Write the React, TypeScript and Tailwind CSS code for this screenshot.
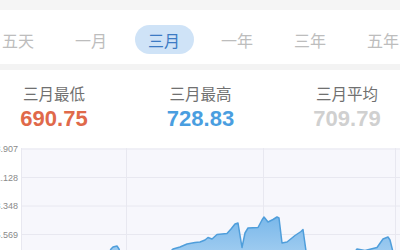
import React from "react";

const tabs = ["五天", "一月", "三月", "一年", "三年", "五年"];

const pts: [number, number][] = [
  [21, 275], [100, 262], [108, 255], [111, 249], [113, 247], [117, 246], [119, 249], [122, 258],
  [166, 260], [170, 252], [173, 249], [180, 247], [187, 244], [195, 242.5], [200, 242], [205, 240],
  [208, 237.5], [212, 239], [217, 234.5], [227, 233.5], [231, 229], [235, 224], [238, 223],
  [242, 247.5], [245, 233], [248, 228], [258, 227.5], [262, 220], [264, 217], [268, 222],
  [273, 219.5], [277, 217], [279, 218], [282, 243], [287, 242], [295, 235.5], [301, 231.5],
  [303, 229.5], [306, 251], [310, 262], [350, 262], [354, 253], [357, 249], [365, 250.5],
  [373, 248.5], [377, 247.5], [383, 239], [388, 237], [390, 240], [393, 252], [400, 262],
];

export default function App() {
  const oy = 140;
  const line = pts.map(([x, y], i) => `${i === 0 ? "M" : "L"}${x} ${y - oy}`).join(" ");
  const area = `${line} L400 130 L21 130 Z`;
  const gridY = [149, 177.5, 206, 234.5];
  const labels = ["728.907", "721.128", "713.348", "705.569"];
  const gridX = [21.5, 126.5, 263.5, 395.5];
  return (
    <div
      className="w-[400px] h-[250px] overflow-hidden bg-white"
      style={{ fontFamily: '"Noto Sans CJK SC", "Noto Sans", sans-serif' }}
    >
      <div className="h-[10px] bg-[#f5f5f5]" />
      <div className="bg-white pt-[15px] pb-[10px] overflow-hidden">
        <div className="flex gap-[14px] ml-[-11.5px]">
          {tabs.map((t, i) => (
            <div
              key={t}
              className={
                i === 2
                  ? "shrink-0 w-[59px] h-[29px] rounded-full bg-[#cfe3f7] text-[#3d7bc4] text-[16px] flex items-center justify-center"
                  : "shrink-0 w-[59px] h-[29px] rounded-full text-[#bdbdbd] text-[16px] flex items-center justify-center"
              }
            >
              {t}
            </div>
          ))}
        </div>
      </div>
      <div className="h-[6px] bg-[#f3f3f3]" />
      <div className="flex justify-between pl-[22px] pr-[21px] pt-[14px] h-[70px]">
        {[
          ["三月最低", "690.75", "text-[#e0694a]"],
          ["三月最高", "728.83", "text-[#4a9ee0]"],
          ["三月平均", "709.79", "text-[#d0d0d0]"],
        ].map(([l, v, c]) => (
          <div key={l} className="flex flex-col items-center w-[64px]">
            <div className="text-[15.5px] leading-[18px] text-[#707070]">{l}</div>
            <div
              className={`mt-[4px] text-[22px] leading-[26px] font-bold ${c}`}
              style={{ fontFamily: '"Liberation Sans", Arial, sans-serif' }}
            >
              {v}
            </div>
          </div>
        ))}
      </div>
      <svg width="400" height="110" viewBox="0 0 400 110" className="block">
        <defs>
          <linearGradient id="g" x1="0" y1="0" x2="0" y2="1">
            <stop offset="0" stopColor="#7ab8ea" />
            <stop offset="1" stopColor="#b6d8f4" />
          </linearGradient>
        </defs>
        <rect x="21" y={148 - oy} width="379" height="110" fill="#f7f7fc" />
        {gridY.map((y) => (
          <line key={y} x1="21" x2="400" y1={y - oy} y2={y - oy} stroke="#e8e8f0" strokeWidth="1" />
        ))}
        {gridX.map((x) => (
          <line key={x} x1={x} x2={x} y1={148 - oy} y2="110" stroke="#e8e8f0" strokeWidth="1" />
        ))}
        <path d={area} fill="url(#g)" />
        <path d={line} fill="none" stroke="#4f9edb" strokeWidth="1.5" strokeLinejoin="round" />
        {labels.map((t, i) => (
          <text
            key={t}
            x="18"
            y={gridY[i] - oy + 3.2}
            textAnchor="end"
            fontSize="9"
            fill="#8a8a8a"
            fontFamily='"Liberation Sans", Arial, sans-serif'
          >
            {t}
          </text>
        ))}
      </svg>
    </div>
  );
}
